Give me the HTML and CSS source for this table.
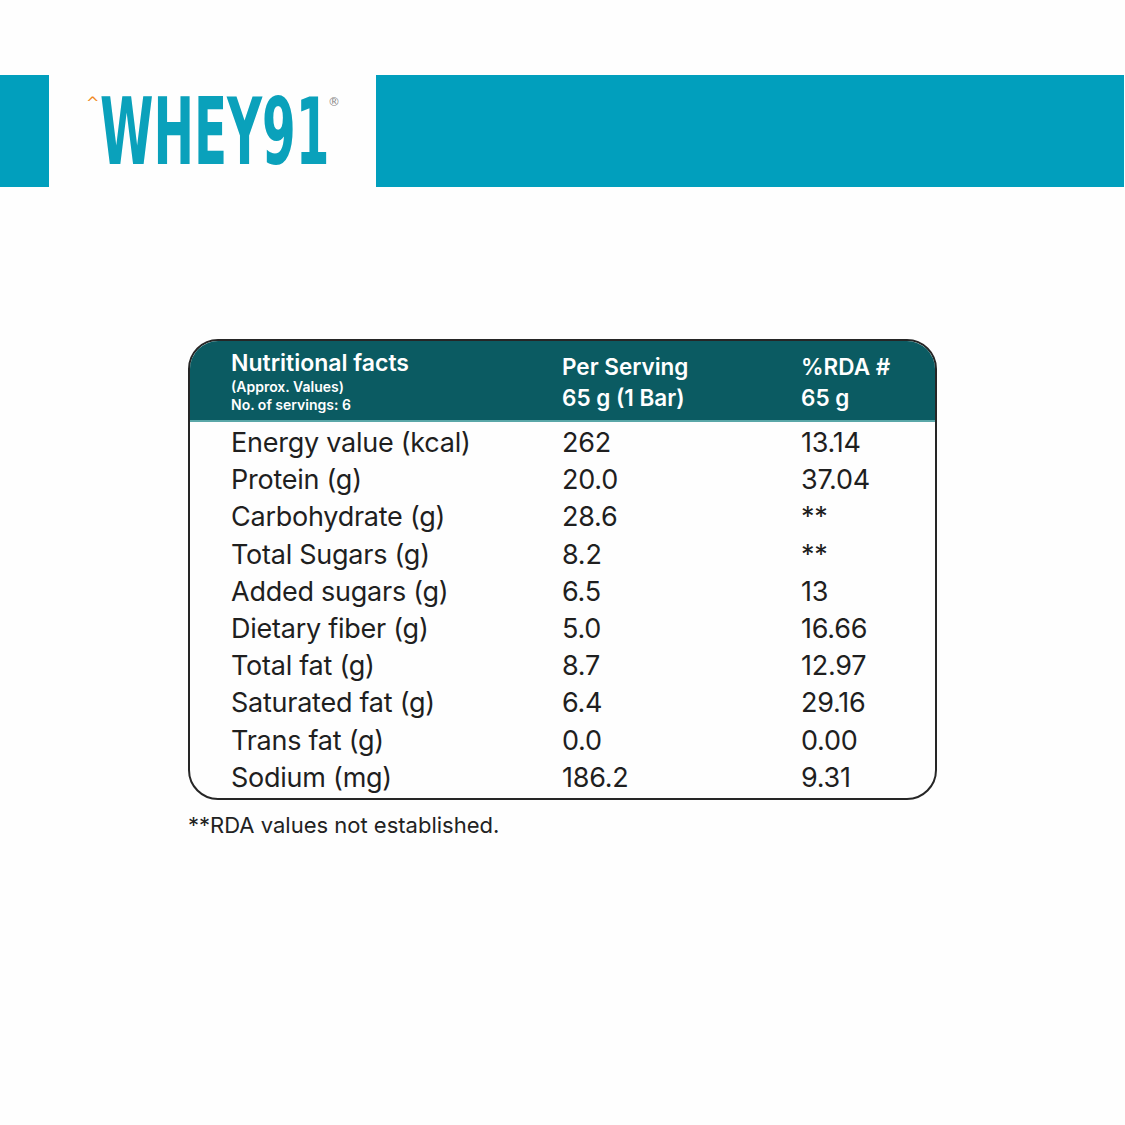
FILE: index.html
```html
<!DOCTYPE html>
<html>
<head>
<meta charset="utf-8">
<link rel="stylesheet" href="styles.css">
</head>
<body>
<div class="banner">
  <div class="band band-left"></div>
  <div class="logo-area">
    <div class="logo">
      <span class="caret">^</span>
      <span class="word">WHEY91</span>
      <span class="reg">®</span>
    </div>
  </div>
  <div class="band band-right"></div>
</div>

<div class="card">
  <div class="head">
    <div class="hcol">
      <div class="htitle">Nutritional facts</div>
      <div class="hsub">(Approx. Values)</div>
      <div class="hsub">No. of servings: 6</div>
    </div>
    <div class="hcol hcol2">
      <div class="hline">Per Serving</div>
      <div class="hline">65 g (1 Bar)</div>
    </div>
    <div class="hcol hcol2">
      <div class="hline">%RDA #</div>
      <div class="hline">65 g</div>
    </div>
  </div>
  <div class="rows">
    <div class="row"><span>Energy value (kcal)</span><span>262</span><span>13.14</span></div>
    <div class="row"><span>Protein (g)</span><span>20.0</span><span>37.04</span></div>
    <div class="row"><span>Carbohydrate (g)</span><span>28.6</span><span class="ast">**</span></div>
    <div class="row"><span>Total Sugars (g)</span><span>8.2</span><span class="ast">**</span></div>
    <div class="row"><span>Added sugars (g)</span><span>6.5</span><span>13</span></div>
    <div class="row"><span>Dietary fiber (g)</span><span>5.0</span><span>16.66</span></div>
    <div class="row"><span>Total fat (g)</span><span>8.7</span><span>12.97</span></div>
    <div class="row"><span>Saturated fat (g)</span><span>6.4</span><span>29.16</span></div>
    <div class="row"><span>Trans fat (g)</span><span>0.0</span><span>0.00</span></div>
    <div class="row"><span>Sodium (mg)</span><span>186.2</span><span>9.31</span></div>
  </div>
</div>
<div class="note">**RDA values not established.</div>
</body>
</html>
```
FILE: styles.css
```css
html, body {
  margin: 0;
  padding: 0;
  background: #fefefe;
}
body {
  width: 1125px;
  height: 1125px;
  overflow: hidden;
  font-family: Inter, "Open Sans", sans-serif;
  color: #1f1f1f;
}
.banner {
  margin-top: 75px;
  height: 112px;
  display: flex;
}
.band {
  background: #019fbd;
}
.band-left {
  width: 49px;
}
.band-right {
  flex: 1;
  margin-right: 1px;
}
.logo-area {
  width: 327px;
}
.logo {
  position: relative;
  height: 112px;
}
.word {
  position: absolute;
  left: 51px;
  top: 12px;
  font-family: "DejaVu Sans Condensed", "DejaVu Sans", sans-serif;
  font-weight: bold;
  font-size: 92px;
  line-height: 92px;
  color: #0aa1bb;
  transform: scaleX(0.585);
  transform-origin: left top;
}
.caret {
  position: absolute;
  left: 37px;
  top: 18px;
  font-family: "DejaVu Sans", sans-serif;
  font-size: 16px;
  color: #f08a24;
}
.reg {
  position: absolute;
  left: 279px;
  top: 20px;
  font-family: "DejaVu Sans", sans-serif;
  font-size: 12px;
  line-height: 14px;
  color: #888;
}
.card {
  margin-top: 152px;
  margin-left: 188px;
  width: 749px;
  height: 461px;
  box-sizing: border-box;
  border: 2px solid #262626;
  border-radius: 30px;
  overflow: hidden;
}
.head {
  background: #0b5b62;
  height: 79px;
  border-bottom: 2px solid #5aa7a8;
  display: grid;
  grid-template-columns: 331px 239px 1fr;
  padding-left: 41px;
  color: #fff;
}
.hcol {
  padding-top: 8px;
}
.htitle {
  font-weight: 600;
  font-size: 23px;
  line-height: 29px;
}
.hsub {
  font-weight: 600;
  font-size: 14px;
  line-height: 18px;
}
.hcol2 {
  padding-top: 10px;
}
.hline {
  font-weight: 600;
  font-size: 22.5px;
  line-height: 31px;
}
.rows {
  padding-left: 41px;
  padding-top: 2px;
}
.row {
  display: grid;
  grid-template-columns: 331px 239px 1fr;
  font-size: 27px;
  letter-spacing: -0.25px;
  line-height: 37.2px;
  height: 37.2px;
}
.note {
  margin-left: 188px;
  margin-top: 12px;
  font-size: 22px;
  color: #222;
}
```
